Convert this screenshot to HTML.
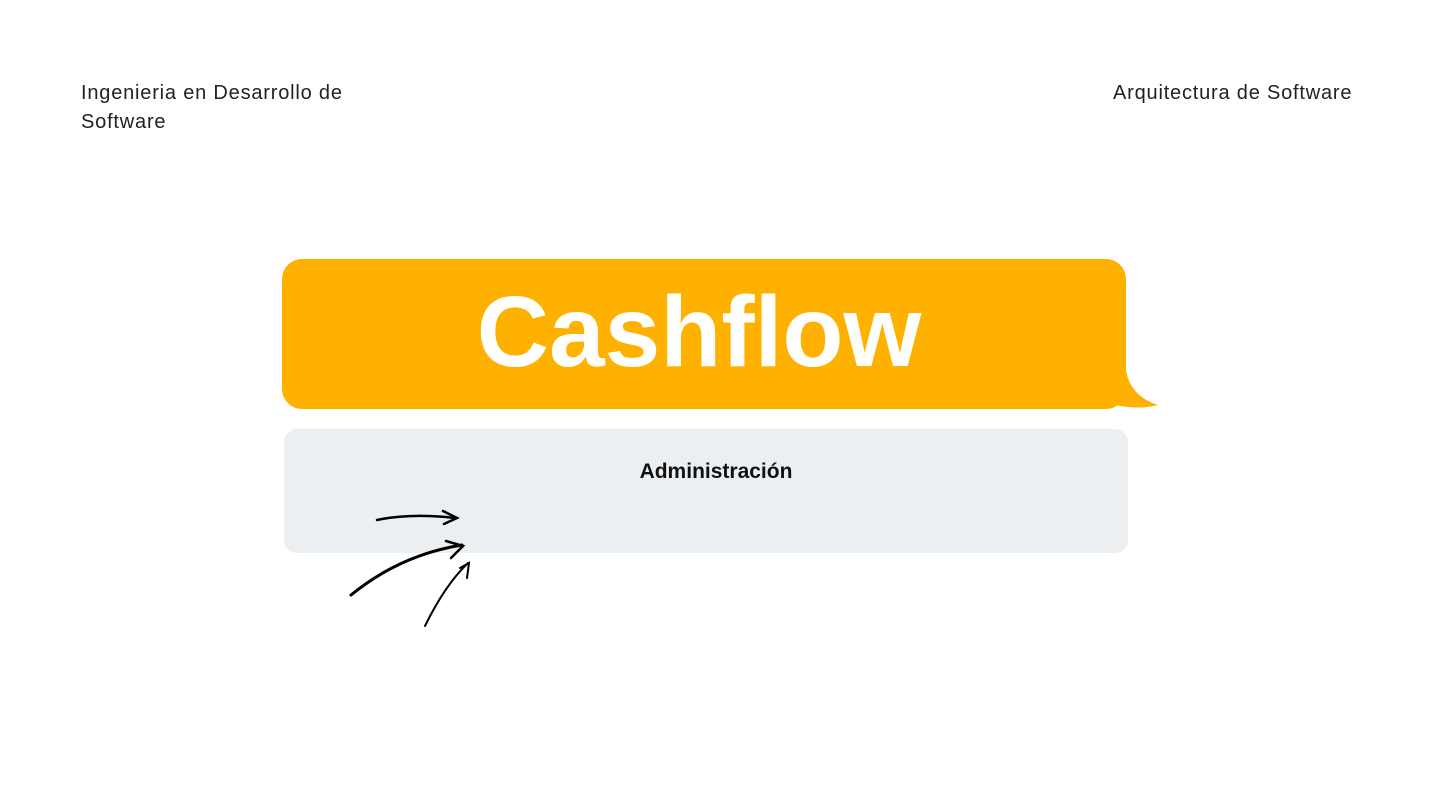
<!DOCTYPE html>
<html><head><meta charset="utf-8"><style>
html,body{margin:0;padding:0;background:#fff;}
body{width:1440px;height:810px;position:relative;overflow:hidden;font-family:"Liberation Sans",sans-serif;}
.t{position:absolute;font-size:20px;letter-spacing:0.8px;color:#222;line-height:29px;}
.y{position:absolute;left:282px;top:259px;width:844px;height:150px;background:#ffb100;border-radius:20px;}
.cf{position:absolute;left:282px;top:259px;width:844px;height:150px;text-align:center;color:#fff;font-weight:bold;font-size:100px;line-height:146px;letter-spacing:0px;margin-left:-5px;}
.g{position:absolute;left:284px;top:429px;width:844px;height:124px;background:#eceff1;border-radius:13px;}
.ad{position:absolute;left:284px;top:460px;width:864px;text-align:center;font-weight:bold;font-size:21px;color:#111;}
</style></head><body>
<div class="t" style="left:81px;top:79px;">Ingenieria en Desarrollo de<br>Software</div>
<div class="t" style="left:1113px;top:79px;">Arquitectura de Software</div>
<svg style="position:absolute;left:0;top:0" width="1440" height="810">
<path d="M1110 370 L1126 370 Q1130 396 1158 405 Q1140 410 1115 405 Z" fill="#ffb100"/>
</svg>
<div class="y"></div>
<div class="cf">Cashflow</div>
<div class="g"></div>
<div class="ad">Administración</div>
<svg style="position:absolute;left:0;top:0" width="1440" height="810">
<g fill="none" stroke="#000" stroke-linecap="round" stroke-width="2.5">
<path d="M377 520 Q410 513 455 518"/>
<path d="M443 511 L457 518 L444 524"/>
<path d="M351 595 Q400 555 462 545" stroke-width="3"/>
<path d="M446 541 L463 546 L451 558"/>
<path d="M425 626 Q445 585 468 563" stroke-width="2"/>
<path d="M460 568 L469 563 L467 578" stroke-width="2"/>
</g>
</svg>
</body></html>
